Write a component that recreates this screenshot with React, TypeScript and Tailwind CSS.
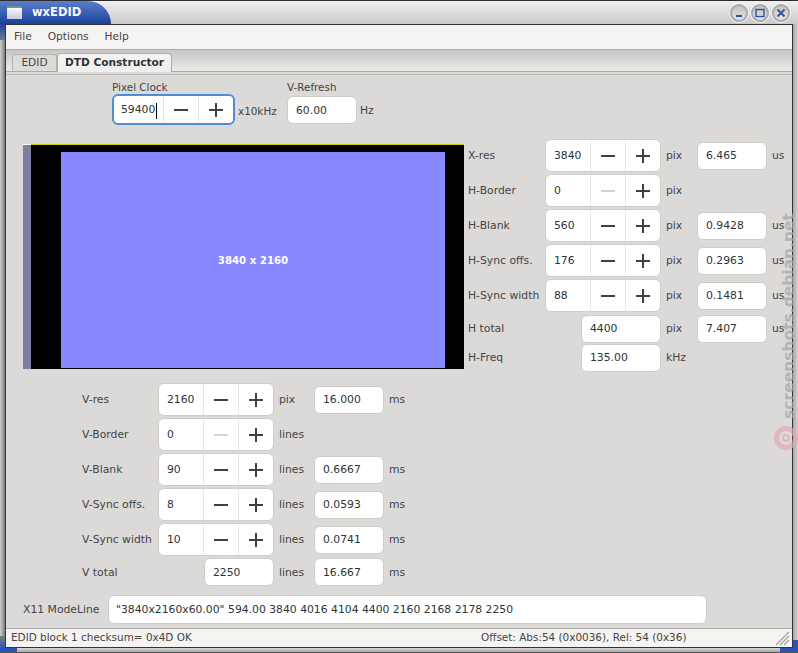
import React from 'react';

const Minus = ({ off }: { off?: boolean }) => (
  <svg width="16" height="16" viewBox="0 0 16 16" className={off ? 'text-[#d5d5d3]' : 'text-[#3c4144]'}>
    <rect x="1" y="7" width="14" height="2" fill="currentColor" />
  </svg>
);

const Plus = () => (
  <svg width="16" height="16" viewBox="0 0 16 16" className="text-[#3c4144]">
    <path d="M1 7h6V1h2v6h6v2H9v6H7V9H1z" fill="currentColor" />
  </svg>
);

// gtk3 style spin entry: value, then minus and plus cells
const Spin = ({ value, off, focus }: { value: string; off?: boolean; focus?: boolean }) => (
  <div
    className={`flex h-[33px] items-stretch rounded-md bg-white ${
      focus ? 'w-[123px] border-2 border-[#4a90d9]' : 'w-[116px] border border-[#d0cdc8]'
    }`}
  >
    <div className={`flex flex-1 items-center pt-[2px] text-[#2e3436] ${focus ? 'pl-[7px]' : 'pl-[8px]'}`}>
      {value}
      {focus && <span className="ml-px h-[16px] w-px bg-black" />}
    </div>
    <div className="flex w-[35px] items-center justify-center border-l border-[#e8e8e6]">
      <Minus off={off} />
    </div>
    <div className="flex w-[35px] items-center justify-center border-l border-[#e8e8e6]">
      <Plus />
    </div>
  </div>
);

const Field = ({ value, wide }: { value: string; wide?: boolean }) => (
  <div
    className={`flex h-[28px] items-center rounded-md border border-[#d0cdc8] bg-white pl-[8px] pt-[2px] text-[#2e3436] ${
      wide ? 'w-[80px]' : 'w-[70px]'
    }`}
  >
    {value}
  </div>
);

type Row = { label: string; value: string; off?: boolean; unit: string; time?: string };

const hRows: Row[] = [
  { label: 'X-res', value: '3840', unit: 'pix', time: '6.465' },
  { label: 'H-Border', value: '0', off: true, unit: 'pix' },
  { label: 'H-Blank', value: '560', unit: 'pix', time: '0.9428' },
  { label: 'H-Sync offs.', value: '176', unit: 'pix', time: '0.2963' },
  { label: 'H-Sync width', value: '88', unit: 'pix', time: '0.1481' },
];

const vRows: Row[] = [
  { label: 'V-res', value: '2160', unit: 'pix', time: '16.000' },
  { label: 'V-Border', value: '0', off: true, unit: 'lines' },
  { label: 'V-Blank', value: '90', unit: 'lines', time: '0.6667' },
  { label: 'V-Sync offs.', value: '8', unit: 'lines', time: '0.0593' },
  { label: 'V-Sync width', value: '10', unit: 'lines', time: '0.0741' },
];

const TimingRow = ({ row, labelW, unitW, timeUnit }: { row: Row; labelW: string; unitW: string; timeUnit: string }) => (
  <div className="flex h-[35px] items-center">
    <div className={`${labelW} pt-[2px]`}>{row.label}</div>
    <Spin value={row.value} off={row.off} />
    <div className={`${unitW} pl-[5px] pt-[2px]`}>{row.unit}</div>
    {row.time && <Field value={row.time} />}
    {row.time && <div className="pl-[5px] pt-[2px]">{timeUnit}</div>}
  </div>
);

const TitleButton = ({ children }: { children: React.ReactNode }) => (
  <div className="flex h-[18px] w-[18px] items-center justify-center rounded-full border-2 border-[#a9a9a9] bg-gradient-to-b from-[#c4c4c4] to-[#e4e4e4] shadow-[0_0_0_1px_#f4f4f4]">
    <svg width="10" height="10" viewBox="0 0 10 10" fill="none" stroke="#2b52ab" strokeWidth="1.4">
      {children}
    </svg>
  </div>
);

export default function App() {
  return (
    <div className="relative flex h-[653px] w-[798px] flex-col overflow-hidden bg-[#c8c8c8] font-['DejaVu_Sans',sans-serif] text-[10.8px] text-[#444]">
      {/* title bar */}
      <div className="flex h-[24px] shrink-0 items-stretch border-t border-[#2a2a2a] bg-gradient-to-b from-[#f0f0f0] to-[#c9c9c9]">
        <div className="flex w-[111px] items-center gap-[10px] rounded-tr-[28px] bg-gradient-to-b from-[#5c7fc8] to-[#1b3f9d] pl-[7px]">
          <div className="h-[13px] w-[15px] border-t-[2px] border-[#7a8bab] bg-gradient-to-b from-[#f8f8f8] to-[#c4ccda]" />
          <span className="text-[11.5px] font-bold text-[#f4f6fb]">wxEDID</span>
        </div>
        <div className="ml-auto flex items-center gap-[3px] pr-[8px] pt-px">
          <TitleButton>
            <path d="M2 8h6" strokeWidth="2" />
          </TitleButton>
          <TitleButton>
            <rect x="1" y="1.5" width="8" height="7" />
          </TitleButton>
          <TitleButton>
            <path d="M1.5 1.5l7 7M8.5 1.5l-7 7" strokeWidth="1.8" />
          </TitleButton>
        </div>
      </div>

      <div className="flex h-[624px] shrink-0">
        {/* left window frame */}
        <div className="flex w-[5px] flex-col">
          <div className="h-[16px] bg-gradient-to-b from-[#1b3f9d] to-[#6f7a92]" />
          <div className="flex-1 bg-gradient-to-r from-[#d0d0d0] to-[#7d7d7d]" />
          <div className="h-[12px] bg-gradient-to-b from-[#7d7d7d] to-[#2a55b8]" />
        </div>

        {/* client area */}
        <div className="flex w-[788px] flex-col border border-[#333] bg-[#dcdad8]">
          <div className="flex h-[24px] shrink-0 items-center gap-[16px] bg-[#f5f4f2] pl-[8px] text-[10.6px]">
            <span>File</span>
            <span>Options</span>
            <span>Help</span>
          </div>

          {/* tabs */}
          <div className="flex h-[23px] shrink-0 items-end border-y border-[#aeaca9] bg-gradient-to-b from-[#c6c6c4] to-[#ecebe9] pl-[6px] text-[10.6px]">
            <div className="flex h-[17px] w-[45px] items-center justify-center rounded-t-[3px] border border-b-0 border-[#b4b2af] bg-[#dedcda]">
              EDID
            </div>
            <div className="-mb-px flex h-[19px] w-[115px] items-center justify-center rounded-t-[3px] border border-b-0 border-[#aeaca9] bg-gradient-to-b from-[#f5f4f2] to-[#f0efed] font-bold text-[#2e3436]">
              DTD Constructor
            </div>
          </div>

          {/* page */}
          <div className="flex flex-1 flex-col">
            <div className="mt-[2px] h-px bg-[#b8b6b3]" />

            <div className="flex h-[50px] pl-[106px] pt-[6px]">
              <div className="flex flex-col">
                <span className="h-[13px] text-[10.4px] leading-[13px]">Pixel Clock</span>
                <Spin value="59400" focus />
              </div>
              <div className="mt-[23px] h-[14px] w-[43px] pl-[3px] text-[10.4px] leading-[14px]">x10kHz</div>
              <div className="ml-[9px] flex flex-col gap-[2px]">
                <span className="h-[13px] text-[10.4px] leading-[13px]">V-Refresh</span>
                <Field value="60.00" />
              </div>
              <div className="mt-[23px] h-[14px] pl-[3px] leading-[14px]">Hz</div>
            </div>

            {/* preview and horizontal timings */}
            <div className="mt-[13px] flex pl-[17px]">
              <div className="mt-[6px] flex h-[225px] w-[441px] shrink-0">
                <div className="w-[8px] border-t border-white bg-[#7e7ea2]" />
                <div className="flex-1 border-t border-[#c8cc00] bg-black pt-[7px]">
                  <div className="ml-[30px] flex h-[216px] w-[384px] items-center justify-center bg-[#8888ff] pt-[2px] text-[10.2px] font-bold text-white">
                    3840 x 2160
                  </div>
                </div>
              </div>
              <div className="pl-[4px]">
                {hRows.map((r) => (
                  <TimingRow key={r.label} row={r} labelW="w-[77px]" unitW="w-[36px]" timeUnit="us" />
                ))}
                <div className="mt-px flex h-[29px] items-center">
                  <div className="w-[113px] pt-[2px]">H total</div>
                  <Field value="4400" wide />
                  <div className="w-[36px] pl-[5px] pt-[2px]">pix</div>
                  <Field value="7.407" />
                  <div className="pl-[5px] pt-[2px]">us</div>
                </div>
                <div className="flex h-[29px] items-center">
                  <div className="w-[113px] pt-[2px]">H-Freq</div>
                  <Field value="135.00" wide />
                  <div className="pl-[5px] pt-[2px]">kHz</div>
                </div>
              </div>
            </div>

            {/* vertical timings */}
            <div className="mt-[10px] pl-[76px]">
              {vRows.map((r) => (
                <TimingRow key={r.label} row={r} labelW="w-[76px]" unitW="w-[40px]" timeUnit="ms" />
              ))}
              <div className="flex h-[30px] items-center">
                <div className="w-[122px] pt-[2px]">V total</div>
                <Field value="2250" />
                <div className="w-[40px] pl-[5px] pt-[2px]">lines</div>
                <Field value="16.667" />
                <div className="pl-[5px] pt-[2px]">ms</div>
              </div>
            </div>

            <div className="mt-[8px] flex items-center pl-[17px]">
              <div className="w-[85px] pt-[2px]">X11 ModeLine</div>
              <div className="flex h-[29px] w-[599px] items-center rounded-md border border-[#d0cdc8] bg-white pl-[7px] pt-[2px] text-[#2e3436]">
                "3840x2160x60.00" 594.00 3840 4016 4104 4400 2160 2168 2178 2250
              </div>
            </div>
          </div>

          {/* status bar */}
          <div className="relative flex h-[19px] shrink-0 items-center border-t border-[#aeaca9] bg-[#f5f4f2] pl-[5px] text-[10.45px]">
            <div className="w-[470px]">EDID block 1 checksum= 0x4D OK</div>
            <div>Offset: Abs:54 (0x0036), Rel: 54 (0x36)</div>
            <svg width="15" height="15" viewBox="0 0 15 15" className="absolute bottom-[1px] right-[2px]" stroke="#a8a6a3" strokeWidth="1.4">
              <path d="M1 14L14 1M5 14l9-9M9 14l5-5" />
            </svg>
          </div>
        </div>

        {/* right window frame */}
        <div className="flex w-[5px] flex-col bg-gradient-to-r from-[#a8a8a8] to-[#d4d4d4]">
          <div className="flex-1" />
          <div className="h-[8px] bg-[#2a55b8]" />
        </div>
      </div>

      {/* bottom window frame */}
      <div className="flex flex-1 border-b border-[#555]">
        <div className="w-[17px] bg-[#2a55b8]" />
        <div className="flex-1 bg-gradient-to-b from-[#d8d8d8] to-[#a8a8a8]" />
        <div className="w-[18px] bg-[#2a55b8]" />
      </div>

      {/* watermark over the page */}
      <div className="pointer-events-none absolute left-[778px] top-[213px] rotate-180 text-[15.5px] font-bold text-[#a9a7a5]/75 [writing-mode:vertical-rl]">
        screenshots.debian.net
      </div>
      <div className="pointer-events-none absolute left-[774px] top-[426px] h-[24px] w-[24px] rounded-full border-[5px] border-[#dfa9b3]/70">
        <div className="mx-auto mt-[3px] h-[8px] w-[8px] rounded-full border-2 border-[#dfa9b3]/70" />
      </div>
    </div>
  );
}
